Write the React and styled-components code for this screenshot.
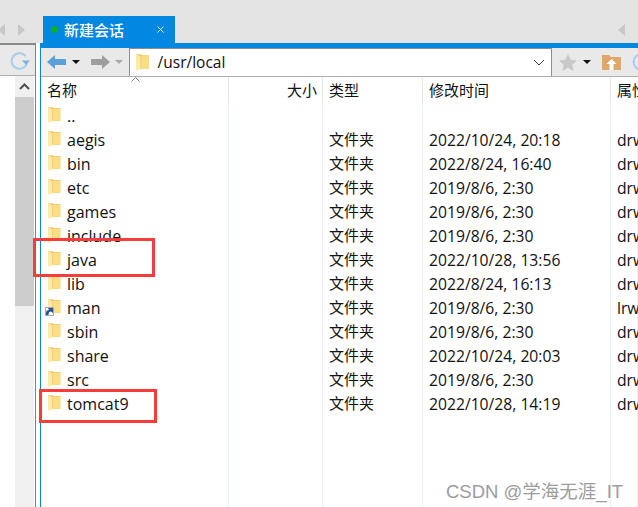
import React from 'react'
import styled, { createGlobalStyle } from 'styled-components'

const files = [
  { name: '..' },
  { name: 'aegis', type: '文件夹', date: '2022/10/24, 20:18', attr: 'drwxr' },
  { name: 'bin', type: '文件夹', date: '2022/8/24, 16:40', attr: 'drwxr' },
  { name: 'etc', type: '文件夹', date: '2019/8/6, 2:30', attr: 'drwxr' },
  { name: 'games', type: '文件夹', date: '2019/8/6, 2:30', attr: 'drwxr' },
  { name: 'include', type: '文件夹', date: '2019/8/6, 2:30', attr: 'drwxr' },
  { name: 'java', type: '文件夹', date: '2022/10/28, 13:56', attr: 'drwxr' },
  { name: 'lib', type: '文件夹', date: '2022/8/24, 16:13', attr: 'drwxr' },
  { name: 'man', type: '文件夹', date: '2019/8/6, 2:30', attr: 'lrwxr', link: true },
  { name: 'sbin', type: '文件夹', date: '2019/8/6, 2:30', attr: 'drwxr' },
  { name: 'share', type: '文件夹', date: '2022/10/24, 20:03', attr: 'drwxr' },
  { name: 'src', type: '文件夹', date: '2019/8/6, 2:30', attr: 'drwxr' },
  { name: 'tomcat9', type: '文件夹', date: '2022/10/28, 14:19', attr: 'drwxr' },
]

const Folder = ({ size = 16 }) => (
  <svg width={size * 0.8} height={size} viewBox="0 0 13 16">
    <path d="M0 0h5l1 1h6.500v13H0z" fill="#f3cb68" />
    <path d="M5 2h7.500v12H5z" fill="#fbdd85" />
    <path d="M0 0l4.500 2.500v11.500L1 16l-1-1z" fill="#fdeaa8" />
    <path d="M4.500 2.500V14" stroke="#f0cf7c" strokeWidth=".7" />
  </svg>
)

const Arrow = ({ color, flip }) => (
  <svg width="20" height="14" viewBox="0 0 20 14" style={flip ? { transform: 'scaleX(-1)' } : undefined}>
    <path d="M0 7l8-7v4h11v6H8v4z" fill={color} />
  </svg>
)

export default function App() {
  return (
    <>
      <GlobalStyle />
      <Page>
        <TopBand>
          <PagerArrows>
            <Pager $left />
            <Pager />
          </PagerArrows>
          <Tab>
            <StatusDot />
            <TabTitle>新建会话</TabTitle>
            <svg width="7" height="7" viewBox="0 0 7 7">
              <path d="M.5.500l6 6M6.500.500l-6 6" stroke="#e4f2fd" strokeWidth="1" />
            </svg>
          </Tab>
          <TabSpacer />
          <TailPager $left />
        </TopBand>
        <Body>
          <LeftPane>
            <LeftToolbar>
              <svg width="20" height="20" viewBox="0 0 20 20">
                <path d="M15.500 5A7.800 7.800 0 1 0 17 12" fill="none" stroke="#a9cdec" strokeWidth="2" />
                <path d="M12 9.500h8L16 14z" fill="#7fb2de" />
              </svg>
            </LeftToolbar>
            <LeftList>
              <LeftGutter />
              <Scrollbar>
                <ScrollUp>
                  <svg width="11" height="7" viewBox="0 0 11 7">
                    <path d="M1 6l4.500-4.500L10 6" fill="none" stroke="#505050" strokeWidth="2" />
                  </svg>
                </ScrollUp>
                <ScrollThumb />
              </Scrollbar>
            </LeftList>
          </LeftPane>
          <Splitter />
          <RightPane>
            <BlueBar />
            <Toolbar>
              <NavGroup>
                <Arrow color="#5b9fd8" />
                <DropCaret $dark />
                <Arrow color="#9e9e9e" flip />
                <DropCaret />
              </NavGroup>
              <AddressBar>
                <Folder size={17} />
                <AddressText>/usr/local</AddressText>
                <svg width="12" height="7" viewBox="0 0 12 7">
                  <path d="M1 1l5 5 5-5" fill="none" stroke="#444" strokeWidth="1" />
                </svg>
              </AddressBar>
              <ToolIcons>
                <svg width="18" height="17" viewBox="0 0 18 17">
                  <path d="M9 0l2.700 5.800 6.300.7-4.700 4.200 1.300 6.300L9 13.800 3.400 17l1.300-6.300L0 6.500l6.300-.7z" fill="#c9c9c9" />
                </svg>
                <DropCaret $dark />
                <svg width="19" height="15" viewBox="0 0 19 15">
                  <path d="M0 0h7l2 2h10v13H0z" fill="#dfa869" />
                  <path d="M9.500 4l5 5h-3v6h-4V9h-3z" fill="#fff" />
                </svg>
                <PeekRefresh width="20" height="20" viewBox="0 0 20 20">
                  <path d="M15.500 5A7.800 7.800 0 1 0 17 12" fill="none" stroke="#a9cdec" strokeWidth="2" />
                </PeekRefresh>
              </ToolIcons>
            </Toolbar>
            <SortMark>
              <svg width="9" height="5" viewBox="0 0 9 5">
                <path d="M.5 4.500l4-4 4 4" fill="none" stroke="#8a8a8a" strokeWidth="1" />
              </svg>
            </SortMark>
            <Table>
              <HeaderRow>
                <HeadCell>名称</HeadCell>
                <HeadCell $right>大小</HeadCell>
                <HeadCell>类型</HeadCell>
                <HeadCell>修改时间</HeadCell>
                <HeadCell>属性</HeadCell>
              </HeaderRow>
              <Rows>
                <ColumnLines>
                  <ColumnLine /><ColumnLine /><ColumnLine /><ColumnLine /><ColumnLine />
                </ColumnLines>
                {files.map((f) => (
                  <Row key={f.name}>
                    <NameCell>
                      <IconSlot>
                        <Folder />
                        {f.link && (
                          <LinkBadge>
                            <svg width="7" height="7" viewBox="0 0 7 7">
                              <path d="M0 7V4.500C0 3 1.500 2 3 2L2 0h5v5L5 3.500C3.500 3.500 2.500 4.500 2.500 7z" fill="#23539c" />
                            </svg>
                          </LinkBadge>
                        )}
                      </IconSlot>
                      <NameText>{f.name}</NameText>
                    </NameCell>
                    <Cell />
                    <TypeCell>{f.type}</TypeCell>
                    <Cell>{f.date}</Cell>
                    <Cell>{f.attr}</Cell>
                  </Row>
                ))}
                <JavaMark />
                <TomcatMark />
              </Rows>
            </Table>
          </RightPane>
        </Body>
        <Watermark>CSDN @学海无涯_IT</Watermark>
      </Page>
    </>
  )
}

const GlobalStyle = createGlobalStyle`
  html, body {
    margin: 0;
    padding: 0;
    background: #fff;
  }
  body {
    font-family: "Open Sans", "Noto Sans CJK SC", sans-serif;
  }
`

const Page = styled.div`
  position: relative;
  width: 638px;
  height: 507px;
  overflow: hidden;
  font-size: 15px;
  color: #111;
  white-space: nowrap;
`

const TopBand = styled.div`
  display: flex;
  align-items: flex-end;
  height: 43px;
  background: #e4e4e4;
`

const PagerArrows = styled.div`
  display: flex;
  justify-content: space-between;
  align-self: center;
  width: 27px;
  margin: 16px 18px 0 -2px;
`

const Pager = styled.span`
  width: 0;
  height: 0;
  border-top: 6px solid transparent;
  border-bottom: 6px solid transparent;
  ${(p) => (p.$left ? 'border-right: 7px solid #c8c8c8;' : 'border-left: 7px solid #c8c8c8;')}
`

const TailPager = styled(Pager)`
  align-self: center;
  margin: 16px 13px 0 0;
`

const Tab = styled.div`
  display: flex;
  align-items: center;
  box-sizing: border-box;
  width: 132px;
  height: 27px;
  padding: 0 11px 0 8px;
  background: #0288e0;
  color: #fff;
`

const StatusDot = styled.span`
  width: 7px;
  height: 7px;
  margin-right: 6px;
  border-radius: 50%;
  background: #0db02b;
`

const TabTitle = styled.span`
  flex: 1;
  font-size: 15px;
  font-weight: 500;
`

const TabSpacer = styled.div`
  flex: 1;
`

const Body = styled.div`
  display: flex;
  height: 464px;
`

const LeftPane = styled.div`
  display: flex;
  flex-direction: column;
  width: 35px;
  border-top: 2px solid #8a8a8a;
`

const LeftToolbar = styled.div`
  display: flex;
  justify-content: flex-end;
  align-items: center;
  flex: none;
  box-sizing: border-box;
  height: 31px;
  padding: 2px 5px 0 0;
  background: #e9e9e9;
  border-bottom: 1px solid #b0b0b0;
`

const LeftList = styled.div`
  display: flex;
  flex: 1;
`

const LeftGutter = styled.div`
  width: 15px;
  background: #fff;
`

const Scrollbar = styled.div`
  display: flex;
  flex-direction: column;
  width: 19px;
  background: #f0f0f0;
`

const ScrollUp = styled.div`
  display: flex;
  align-items: center;
  justify-content: center;
  height: 21px;
`

const ScrollThumb = styled.div`
  height: 209px;
  background: #cdcdcd;
`

const Splitter = styled.div`
  box-sizing: content-box;
  width: 4px;
  border-left: 1px solid #808080;
  background: #fff;
`

const RightPane = styled.div`
  position: relative;
  display: flex;
  flex-direction: column;
  flex: 1;
  min-width: 0;
  border-left: 1px solid #0288e0;
`

const BlueBar = styled.div`
  height: 5px;
  margin-left: -1px;
  background: #0288e0;
`

const Toolbar = styled.div`
  display: flex;
  align-items: stretch;
  box-sizing: border-box;
  height: 29px;
  background: #e9e9e9;
  border-bottom: 1px solid #b0b0b0;
`

const NavGroup = styled.div`
  display: flex;
  align-items: center;
  flex: none;
  gap: 5px;
  width: 88px;
  padding-left: 6px;
  box-sizing: border-box;
`

const DropCaret = styled.span`
  width: 0;
  height: 0;
  margin-right: 5px;
  border-left: 4px solid transparent;
  border-right: 4px solid transparent;
  border-top: 4px solid ${(p) => (p.$dark ? '#111' : '#a8a8a8')};
`

const AddressBar = styled.div`
  display: flex;
  align-items: center;
  flex: none;
  box-sizing: border-box;
  width: 423px;
  padding: 0 6px 0 6px;
  background: #fff;
  border: 1px solid #8e8e8e;
  border-width: 1px 1px 0 1px;
`

const AddressText = styled.span`
  flex: 1;
  margin: -2px 0 0 8px;
  font-size: 15.500px;
`

const ToolIcons = styled.div`
  display: flex;
  align-items: center;
  flex: none;
  gap: 6px;
  padding-left: 7px;
`

const PeekRefresh = styled.svg`
  flex: none;
  margin-left: 5px;
`

const SortMark = styled.div`
  position: absolute;
  top: 33px;
  left: 90px;
  line-height: 0;
`

const Table = styled.div`
  display: flex;
  flex-direction: column;
  flex: 1;
`

const columns = '188px 94px 100px 188px 1fr'

const HeaderRow = styled.div`
  display: grid;
  grid-template-columns: ${columns};
  height: 26px;
`

const HeadCell = styled.div`
  box-sizing: border-box;
  padding: 1px 5px 0 6px;
  border-right: 1px solid #e5e5e5;
  line-height: 25px;
  font-size: 15px;
  ${(p) => p.$right && 'text-align: right;'}
`

const Rows = styled.div`
  position: relative;
  flex: 1;
`

const ColumnLines = styled.div`
  position: absolute;
  inset: 0;
  display: grid;
  grid-template-columns: ${columns};
`

const ColumnLine = styled.div`
  border-right: 1px solid #e8f0fc;
`

const Row = styled.div`
  position: relative;
  display: grid;
  grid-template-columns: ${columns};
  height: 24px;
  align-items: center;
`

const Cell = styled.div`
  padding: 2px 0 0 6px;
  font-size: 15.700px;
`

const TypeCell = styled(Cell)`
  margin-top: -2px;
  padding: 0 0 0 6px;
  font-size: 15px;
`

const NameCell = styled.div`
  display: flex;
  align-items: center;
  font-size: 16px;
`

const NameText = styled.span`
  margin-top: 2px;
`

const IconSlot = styled.span`
  position: relative;
  display: flex;
  width: 26px;
  padding-left: 7px;
  box-sizing: border-box;
`

const LinkBadge = styled.span`
  position: absolute;
  left: 4px;
  bottom: -1px;
  display: flex;
  align-items: center;
  justify-content: center;
  box-sizing: border-box;
  width: 9px;
  height: 9px;
  border: 1px solid #a8a8a8;
  background: #fff;
`

const JavaMark = styled.div`
  position: absolute;
  left: -8px;
  top: 135px;
  width: 122px;
  height: 39px;
  box-sizing: border-box;
  border: 3px solid #f83c3c;
`

const TomcatMark = styled.div`
  position: absolute;
  left: -2px;
  top: 286px;
  width: 118px;
  height: 34px;
  box-sizing: border-box;
  border: 3px solid #f83c3c;
`

const Watermark = styled.div`
  position: absolute;
  left: 446px;
  top: 477px;
  font-family: "Liberation Sans", "Noto Sans CJK SC", sans-serif;
  font-size: 18.500px;
  color: #8c8c8c;
  opacity: 0.85;
`
